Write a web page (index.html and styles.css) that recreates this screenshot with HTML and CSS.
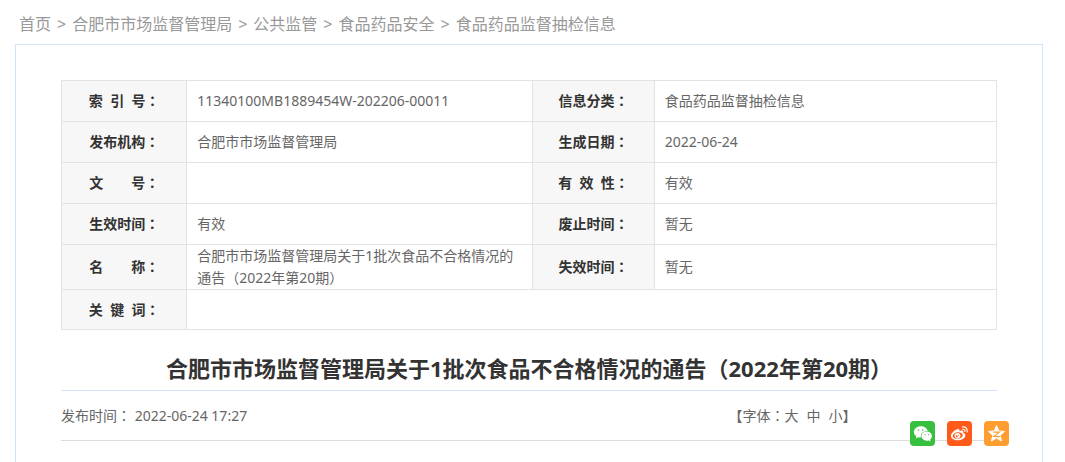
FILE: index.html
```html
<!DOCTYPE html>
<html lang="zh-CN">
<head>
  <meta charset="UTF-8">
  <meta name="viewport" content="width=device-width, initial-scale=1.0">
  <title>合肥市市场监督管理局关于1批次食品不合格情况的通告（2022年第20期）</title>
  <link rel="stylesheet" href="styles.css">
</head>
<body>
  <nav class="crumbs">
    <a href="#">首页</a>
    <span>&gt;</span>
    <a href="#">合肥市市场监督管理局</a>
    <span>&gt;</span>
    <a href="#">公共监管</a>
    <span>&gt;</span>
    <a href="#">食品药品安全</a>
    <span>&gt;</span>
    <a href="#">食品药品监督抽检信息</a>
  </nav>

  <main class="panel">
    <table class="info">
      <colgroup>
        <col class="col-label">
        <col class="col-wide">
        <col class="col-label2">
        <col>
      </colgroup>
      <tr>
        <th scope="row">索&nbsp;&nbsp;引&nbsp;&nbsp;号<span class="mark">：</span></th>
        <td>11340100MB1889454W-202206-00011</td>
        <th scope="row">信息分类<span class="mark">：</span></th>
        <td>食品药品监督抽检信息</td>
      </tr>
      <tr>
        <th scope="row">发布机构<span class="mark">：</span></th>
        <td>合肥市市场监督管理局</td>
        <th scope="row">生成日期<span class="mark">：</span></th>
        <td>2022-06-24</td>
      </tr>
      <tr>
        <th scope="row">文　　号<span class="mark">：</span></th>
        <td></td>
        <th scope="row">有&nbsp;&nbsp;效&nbsp;&nbsp;性<span class="mark">：</span></th>
        <td>有效</td>
      </tr>
      <tr>
        <th scope="row">生效时间<span class="mark">：</span></th>
        <td>有效</td>
        <th scope="row">废止时间<span class="mark">：</span></th>
        <td>暂无</td>
      </tr>
      <tr>
        <th scope="row">名　　称<span class="mark">：</span></th>
        <td>合肥市市场监督管理局关于1批次食品不合格情况的通告（2022年第20期）</td>
        <th scope="row">失效时间<span class="mark">：</span></th>
        <td>暂无</td>
      </tr>
      <tr class="keywords">
        <th scope="row">关&nbsp;&nbsp;键&nbsp;&nbsp;词<span class="mark">：</span></th>
        <td colspan="3"></td>
      </tr>
    </table>

    <h1>合肥市市场监督管理局关于1批次食品不合格情况的通告（2022年第20期）</h1>

    <div class="meta">
      <span>发布时间<span class="mark">：</span> 2022-06-24 17:27</span>
      <div class="sizes">
        <span>【字体<span class="mark">：</span></span>
        <button type="button">大</button>
        <button type="button">中</button>
        <button type="button">小</button>
        <span>】</span>
      </div>
      <div class="share">
        <a class="wechat" href="#" aria-label="微信">
          <svg viewBox="0 0 25 25">
            <path fill="#fff" d="M10.800 5.200c-3.900 0-6.900 2.500-6.900 5.700 0 1.800 1 3.400 2.600 4.500l-.8 2.200 2.700-1.400c.8.2 1.600.4 2.500.4a6 6 0 0 1-.1-1.200c0-3.100 2.900-5.300 6.400-5.300h.5c-.7-2.900-3.500-4.900-6.900-4.900z"/>
            <path fill="#fff" d="M22 15.100c0-2.600-2.500-4.600-5.300-4.600-3 0-5.300 2-5.300 4.600s2.300 4.600 5.300 4.600c.7 0 1.300-.1 1.900-.3l2 1.200-.5-1.900c1.200-.9 1.900-2.100 1.900-3.600z"/>
            <g fill="#37bf40">
              <circle cx="8.400" cy="9" r=".8"/>
              <circle cx="12.600" cy="9" r=".8"/>
              <circle cx="15" cy="13.600" r=".6"/>
              <circle cx="18.500" cy="13.600" r=".6"/>
            </g>
          </svg>
        </a>
        <a class="weibo" href="#" aria-label="微博">
          <svg viewBox="0 0 25 25">
            <path fill="#fff" d="M10.700 8.100c1.300-.4 2.100.3 1.700 1.800 1.900-.8 4.300-.8 3.900 1.500-.1.400 0 .6.500.8 1.200.4 1.700 1.200 1.600 2.200-.3 2.800-3.800 4.900-7.700 4.900-3.800 0-6.700-1.700-6.700-4.300 0-2.700 3.700-6.100 6.700-6.900z"/>
            <ellipse cx="10.800" cy="14.500" rx="5" ry="3.300" fill="#ff5a1a" transform="rotate(-8 10.800 14.500)"/>
            <ellipse cx="10.500" cy="14.700" rx="3" ry="2.600" fill="#fff" transform="rotate(-20 10.500 14.700)"/>
            <circle cx="9.700" cy="15.300" r="1.100" fill="#ff5a1a"/>
            <circle cx="11.600" cy="14.200" r=".5" fill="#ff5a1a"/>
            <path fill="none" stroke="#fff" stroke-width="1.200" stroke-linecap="round" d="M15.500 6c3.100-.5 5.400 1.900 4.600 5M15.900 8.300c1.500-.2 2.400.8 2 2.200"/>
          </svg>
        </a>
        <a class="qzone" href="#" aria-label="QQ空间">
          <svg viewBox="0 0 25 25">
            <path fill="#fff" stroke="#fff" stroke-linejoin="round" d="M12.500 4.600l2.300 5.300 5.700.6-4.300 3.800 1.300 5.700-5-3-5 3 1.300-5.700-4.300-3.800 5.700-.6z"/>
            <path fill="none" stroke="#ff9d2e" stroke-width="1.200" d="M9.300 11.200h6l-5.300 4.200c2 .4 4 .4 6.300.1"/>
          </svg>
        </a>
      </div>
    </div>
  </main>
</body>
</html>
```
FILE: styles.css
```css
* {
  box-sizing: border-box;
}
body {
  margin: 0;
  padding: 0 22px 0 15px;
  background: #fff;
  color: #666;
  font-family: "Noto Sans", "Noto Sans CJK SC", sans-serif;
  font-size: 14px;
  line-height: 22px;
}
a {
  color: inherit;
  text-decoration: none;
}
/* centred full-width colon */
.mark {
  font-family: "Noto Sans CJK TC", sans-serif;
  line-height: 1;
  -webkit-locale: "zh-TW";
}
.crumbs {
  display: flex;
  gap: 6px;
  height: 44px;
  padding: 3px 4px 0;
  align-items: center;
  color: #999;
  font-size: 16px;
}
.panel {
  min-height: calc(100vh - 44px);
  padding: 35px 45px 0;
  border: 1px solid #d0e5fb;
  border-bottom: 0;
}
.info {
  width: 100%;
  table-layout: fixed;
  border-collapse: collapse;
}
.col-label {
  width: 13.4%;
}
.col-wide {
  width: 37%;
}
.col-label2 {
  width: 13%;
}
.info th,
.info td {
  height: 41px;
  padding: 0 10px;
  border: 1px solid #e3e3e3;
}
.info th {
  background: #f7f7f7;
  color: #333;
  text-align: center;
}
.info td {
  text-align: left;
}
.info .keywords th,
.info .keywords td {
  height: 40px;
}
h1 {
  margin: 19px 0 0;
  padding-bottom: 3px;
  border-bottom: 1px solid #d0e5fb;
  color: #333;
  font-size: 22px;
  line-height: 38px;
  text-align: center;
}
.meta {
  position: relative;
  display: flex;
  justify-content: space-between;
  align-items: center;
  height: 50px;
  padding-right: 15%;
  border-bottom: 1px solid #ddd;
}
.sizes {
  display: flex;
}
.sizes button {
  margin: 0 8px 0 0;
  padding: 0;
  border: 0;
  background: none;
  color: inherit;
  font: inherit;
  cursor: pointer;
}
.sizes button:last-of-type {
  margin: 0;
}
.share {
  position: absolute;
  right: -12px;
  bottom: -6px;
  display: flex;
  gap: 12px;
}
.share a {
  width: 25px;
  height: 25px;
  border-radius: 4px;
}
.share svg {
  display: block;
}
.wechat {
  background: #37bf40;
}
.weibo {
  background: #ff5a1a;
}
.qzone {
  background: #ff9d2e;
}
```
